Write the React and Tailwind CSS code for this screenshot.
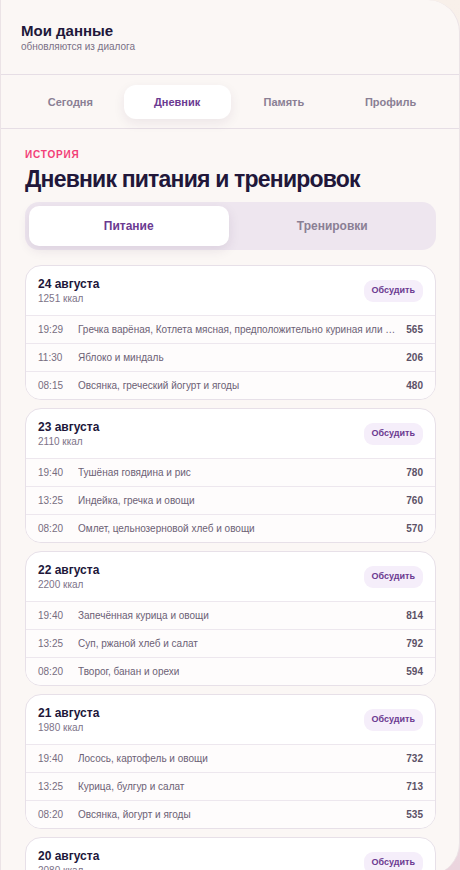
import React, { useState } from 'react';

const font = { fontFamily: '"Liberation Sans", Arial, sans-serif' };

const days = [
  {
    date: '24 августа',
    kcal: 1251,
    meals: [
      ['19:29', 'Гречка варёная, Котлета мясная, предположительно куриная или индюшиная, салат из овощей', 565],
      ['11:30', 'Яблоко и миндаль', 206],
      ['08:15', 'Овсянка, греческий йогурт и ягоды', 480],
    ],
  },
  {
    date: '23 августа',
    kcal: 2110,
    meals: [
      ['19:40', 'Тушёная говядина и рис', 780],
      ['13:25', 'Индейка, гречка и овощи', 760],
      ['08:20', 'Омлет, цельнозерновой хлеб и овощи', 570],
    ],
  },
  {
    date: '22 августа',
    kcal: 2200,
    meals: [
      ['19:40', 'Запечённая курица и овощи', 814],
      ['13:25', 'Суп, ржаной хлеб и салат', 792],
      ['08:20', 'Творог, банан и орехи', 594],
    ],
  },
  {
    date: '21 августа',
    kcal: 1980,
    meals: [
      ['19:40', 'Лосось, картофель и овощи', 732],
      ['13:25', 'Курица, булгур и салат', 713],
      ['08:20', 'Овсянка, йогурт и ягоды', 535],
    ],
  },
  {
    date: '20 августа',
    kcal: 2080,
    meals: [
      ['19:40', 'Паста с индейкой и овощами', 810],
      ['13:25', 'Рис, курица и салат', 740],
      ['08:20', 'Омлет и тост', 530],
    ],
  },
];

const tabs = ['Сегодня', 'Дневник', 'Память', 'Профиль'];

function DayCard({ day }) {
  return (
    <div className="rounded-[16px] border border-[#e7e0e8] bg-white overflow-hidden shrink-0">
      <div className="h-[49px] px-3 flex items-center justify-between">
        <div className="flex flex-col pt-[1px]">
          <span className="text-[12px] font-bold leading-[15px] text-[#21173a]">{day.date}</span>
          <span className="text-[10px] leading-[13px] text-[#7d7388]">{day.kcal} ккал</span>
        </div>
        <button className="h-[22px] px-2 rounded-[9px] bg-[#f5eefa] text-[9px] font-bold text-[#6b3a91]">
          Обсудить
        </button>
      </div>
      {day.meals.map(([time, text, value]) => (
        <div key={time} className="h-[28px] px-3 flex items-center gap-[10px] border-t border-[#ede7ee] bg-[#fefcfc] text-[10px]">
          <span className="w-[30px] shrink-0 text-[#776d80]">{time}</span>
          <span className="flex-1 min-w-0 truncate text-[#6c6175]">{text}</span>
          <span className="shrink-0 font-bold text-[#5c5166]">{value}</span>
        </div>
      ))}
    </div>
  );
}

export default function App() {
  const [tab, setTab] = useState('Дневник');
  const [mode, setMode] = useState('Питание');

  return (
    <div style={font} className="w-[460px] h-[870px] overflow-hidden bg-gradient-to-b from-[#f8f0ea] via-[#f4e8e6] to-[#ebd5de]">
      <div className="w-[460px] h-[875px] rounded-tr-[32px] rounded-br-[32px] border-l border-r border-[#ebe3e6] bg-[#fbf7f5] flex flex-col overflow-hidden">
        <div className="h-[75px] shrink-0 px-[20px] pt-[22px] border-b border-[#e6dee5]">
          <div className="text-[15px] font-bold leading-[18px] text-[#21173a]">Мои данные</div>
          <div className="text-[10px] leading-[13px] text-[#7a7085]">обновляются из диалога</div>
        </div>

        <div className="h-[54px] shrink-0 pl-[16px] pr-[15px] py-[10px] border-b border-[#e6dee5] grid grid-cols-4">
          {tabs.map((t) => (
            <button
              key={t}
              onClick={() => setTab(t)}
              className={
                t === tab
                  ? 'h-[34px] rounded-[12px] bg-white shadow-[0_4px_12px_rgba(60,30,80,0.08)] text-[11px] font-bold text-[#6b3a91]'
                  : 'h-[34px] rounded-[12px] text-[11px] font-bold text-[#8a7f94]'
              }
            >
              {t}
            </button>
          ))}
        </div>

        <div className="pl-[24px] pr-[23px] pt-[20px] flex flex-col">
          <div className="text-[10px] font-bold tracking-[0.08em] leading-[12px] text-[#f23f78]">ИСТОРИЯ</div>
          <h1 className="mt-[3px] text-[23px] font-bold leading-[30px] tracking-[-0.035em] text-[#21173a]">
            Дневник питания и тренировок
          </h1>
          <div className="mt-[8px] h-[48px] p-[4px] rounded-[14px] bg-[#eee6ef] grid grid-cols-2 gap-[4px]">
            {['Питание', 'Тренировки'].map((m) => (
              <button
                key={m}
                onClick={() => setMode(m)}
                className={
                  m === mode
                    ? 'rounded-[10px] bg-white shadow-[0_4px_12px_rgba(60,30,80,0.10)] text-[12px] font-bold text-[#6b3a91]'
                    : 'rounded-[10px] text-[12px] font-bold text-[#8a7f94]'
                }
              >
                {m}
              </button>
            ))}
          </div>

          <div className="mt-[15px] flex flex-col gap-[8px]">
            {days.map((d) => (
              <DayCard key={d.date} day={d} />
            ))}
          </div>
        </div>
      </div>
    </div>
  );
}
